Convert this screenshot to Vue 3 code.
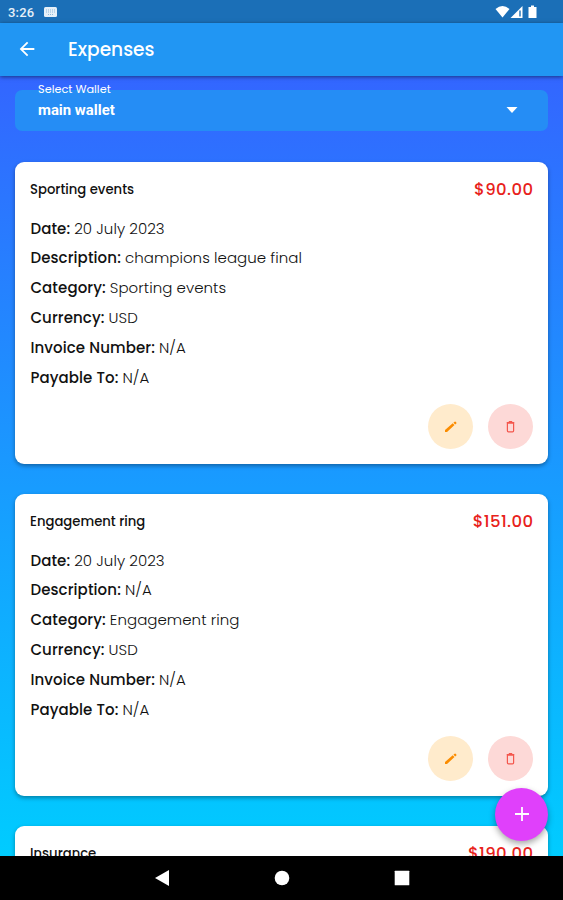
<template>
  <div class="screen">
    <div class="status-bar">
      <span class="clock">3:26</span>
      <svg class="keyboard" viewBox="0 0 13 10">
        <rect width="13" height="10" rx="1.5" fill="#e6f0f8" />
        <path d="M2 3h9M2 5h9M4 7.5h5" stroke="#8fb9da" stroke-dasharray="1 1" />
      </svg>
      <svg class="signals" viewBox="0 0 44 14">
        <path d="M0.5 4Q7.5 -1.8 14.5 4L7.5 12.5Z" fill="#fff" />
        <path d="M15.5 13L27.5 1V13Z" fill="#fff" />
        <path d="M25 5.5V11.5" stroke="#1b6fb7" stroke-width="1.4" />
        <path d="M33.5 2h2.5V0.5h3V2h2.5V13h-8z" fill="#fff" />
      </svg>
    </div>

    <header class="app-bar">
      <svg class="back" viewBox="0 0 24 24">
        <path d="M20 11H7.83l5.59-5.59L12 4l-8 8 8 8 1.41-1.41L7.83 13H20z" fill="#fff" />
      </svg>
      <h1>Expenses</h1>
    </header>

    <main>
      <div class="wallet">
        <label>Select Wallet</label>
        <span class="wallet-name">{{ wallet }}</span>
        <svg class="caret" viewBox="0 0 12 6"><path d="M0.5 0h11L6 6z" fill="#fff" /></svg>
      </div>

      <section v-for="item in expenses" :key="item.title" class="card">
        <div class="card-head">
          <h2>{{ item.title }}</h2>
          <span class="amount">{{ item.amount }}</span>
        </div>
        <p v-for="row in item.rows" :key="row.label" class="row">
          <b>{{ row.label }}:</b> <span>{{ row.value }}</span>
        </p>
        <div class="actions">
          <button class="edit">
            <svg viewBox="0 0 15 15">
              <path d="M2 13v-2L9.7 4.3l1.8 1.8L4 13zM10.4 3.7l1.2-1a0.7 0.7 0 0 1 1 0l0.7 0.8a0.7 0.7 0 0 1 0 1l-1.1 1z" fill="#fb8c00" />
            </svg>
          </button>
          <button class="delete">
            <svg viewBox="0 0 15 15">
              <path d="M4.4 4.2h6.2v7.6a1 1 0 0 1-1 1H5.4a1 1 0 0 1-1-1zM3.7 3.6h7.6M5.8 2.6h3.4" fill="none" stroke="#f4574d" stroke-width="1.2" />
            </svg>
          </button>
        </div>
      </section>
    </main>

    <button class="fab">
      <svg viewBox="0 0 14 14"><path d="M7 0v14M0 7h14" stroke="#fff" stroke-width="1.8" /></svg>
    </button>

    <nav class="nav-bar">
      <svg viewBox="0 0 16 16"><path d="M15 0v16L1 8z" fill="#fff" /></svg>
      <svg viewBox="0 0 16 16"><circle cx="8" cy="8" r="7.3" fill="#fff" /></svg>
      <svg viewBox="0 0 16 16"><rect x="0.7" y="0.7" width="14.6" height="14.6" rx="0.5" fill="#fff" /></svg>
    </nav>
  </div>
</template>

<script setup>
import { ref } from 'vue';

const wallet = ref('main wallet');

function details(category, description) {
  return [
    { label: 'Date', value: '20 July 2023' },
    { label: 'Description', value: description },
    { label: 'Category', value: category },
    { label: 'Currency', value: 'USD' },
    { label: 'Invoice Number', value: 'N/A' },
    { label: 'Payable To', value: 'N/A' },
  ];
}

const expenses = ref([
  { title: 'Sporting events', amount: '$90.00', rows: details('Sporting events', 'champions league final') },
  { title: 'Engagement ring', amount: '$151.00', rows: details('Engagement ring', 'N/A') },
  { title: 'Insurance', amount: '$190.00', rows: [] },
]);
</script>

<style>
body {
  margin: 0;
}
</style>

<style scoped>
.screen {
  position: relative;
  display: flex;
  flex-direction: column;
  height: 900px;
  overflow: hidden;
  font-family: Poppins, Inter, sans-serif;
  color: #111;
}
.status-bar {
  display: flex;
  align-items: center;
  flex: none;
  box-sizing: border-box;
  height: 23px;
  padding: 0 24px 0 8px;
  background: #1b6fb7;
}
.clock {
  font: 500 13px Roboto, sans-serif;
  letter-spacing: 0.2px;
  color: #e6f0f8;
  padding-top: 2px;
}
.keyboard {
  width: 13px;
  height: 10px;
  margin-left: 10px;
}
.signals {
  width: 44px;
  height: 14px;
  margin-left: auto;
}
.app-bar {
  display: flex;
  align-items: center;
  flex: none;
  z-index: 1;
  box-sizing: border-box;
  height: 53px;
  padding: 0 0 1px 16px;
  background: #2196f3;
  box-shadow: 0 1px 4px rgba(0, 0, 0, 0.5);
}
.back {
  width: 22px;
  height: 22px;
}
h1 {
  margin: 0 0 0 30px;
  font-size: 18.6px;
  font-weight: 500;
  color: #fff;
}
main {
  flex: 1;
  min-height: 0;
  overflow: hidden;
  padding: 14px 15px 0;
  background: linear-gradient(#3366ff, #00ccff);
}
.wallet {
  position: relative;
  display: flex;
  align-items: center;
  justify-content: space-between;
  box-sizing: border-box;
  height: 41px;
  padding: 0 30px 2px 23px;
  border-radius: 7px;
  background: #258df5;
  color: #fff;
}
/* floating label sits across the top edge of the field */
.wallet label {
  position: absolute;
  top: -8px;
  left: 23px;
  font-size: 11.3px;
  line-height: 14px;
}
.wallet-name {
  font: 700 14.9px Roboto, sans-serif;
}
.caret {
  width: 12px;
  height: 6px;
}
.card {
  box-sizing: border-box;
  height: 302px;
  margin-top: 30px;
  padding: 12px 15px 15px;
  border-radius: 9px;
  background: #fff;
  box-shadow: 0 2px 4px rgba(0, 0, 0, 0.35);
}
.wallet + .card {
  margin-top: 31px;
}
.card-head {
  display: flex;
  align-items: center;
  justify-content: space-between;
  height: 30px;
  margin-bottom: 9.5px;
}
h2 {
  margin: 0;
  padding-top: 1px;
  font-size: 13.2px;
  font-weight: 500;
}
.amount {
  font-size: 16.5px;
  font-weight: 500;
  letter-spacing: 0.4px;
  margin-right: -0.4px;
  color: #e8221b;
}
.row {
  margin: 0;
  padding-left: 0.4px;
  font-size: 15px;
  line-height: 29.9px;
}
.row b {
  font-weight: 500;
  letter-spacing: 0.1px;
}
.row span {
  font-weight: 300;
  letter-spacing: 0.05px;
}
.actions {
  display: flex;
  justify-content: flex-end;
  gap: 15px;
  margin-top: 11.5px;
}
button {
  display: flex;
  align-items: center;
  justify-content: center;
  padding: 0;
  border: none;
  border-radius: 50%;
}
.actions button {
  width: 45px;
  height: 45px;
}
.actions svg {
  width: 15px;
  height: 15px;
}
.edit {
  background: #ffebcc;
}
.delete {
  background: #fdd9d7;
}
.fab {
  position: absolute;
  right: 15px;
  bottom: 59.5px;
  z-index: 2;
  width: 53px;
  height: 53px;
  background: #e040fb;
  box-shadow: 0 3px 6px rgba(0, 0, 0, 0.35);
}
.fab svg {
  width: 14px;
  height: 14px;
}
.nav-bar {
  display: flex;
  align-items: center;
  justify-content: center;
  flex: none;
  gap: 104px;
  height: 44px;
  background: #000;
}
.nav-bar svg {
  width: 16px;
  height: 16px;
}
</style>
